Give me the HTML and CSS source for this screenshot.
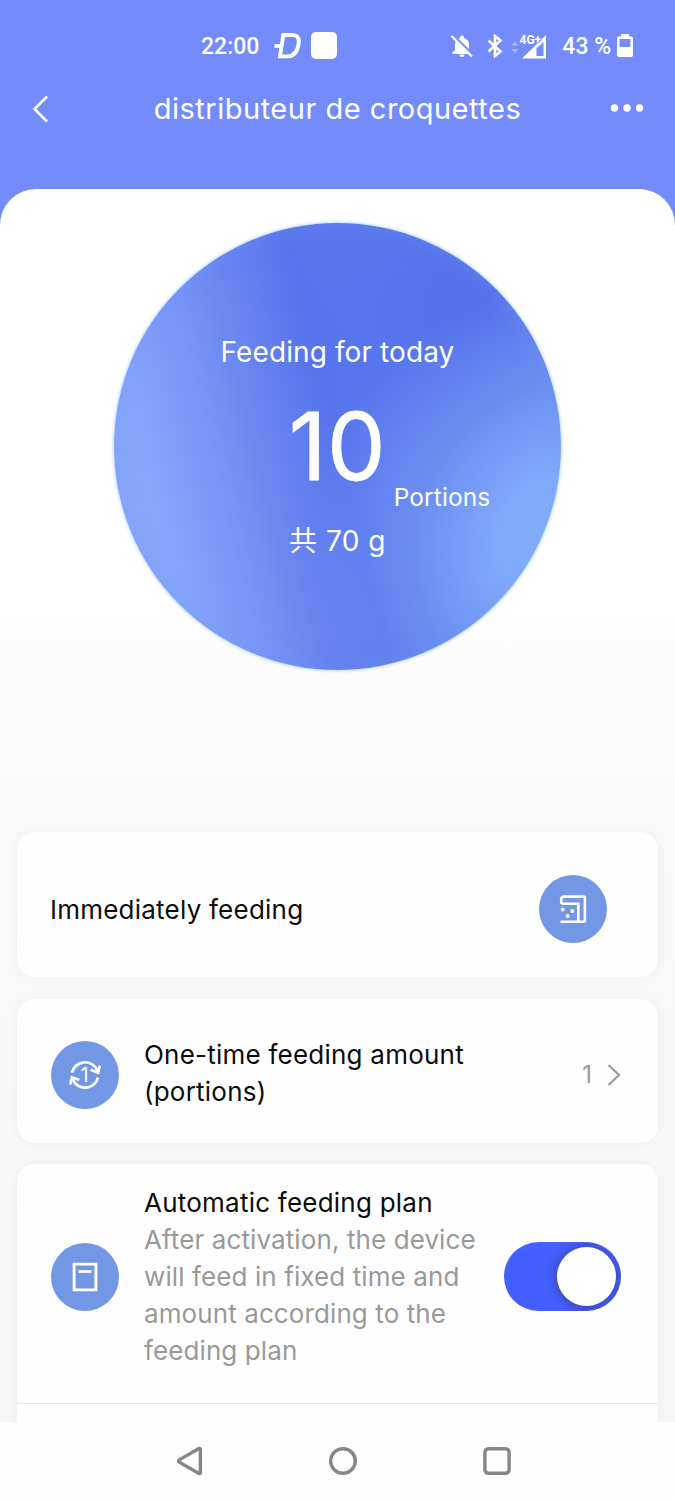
FILE: index.html
```html
<!DOCTYPE html>
<html lang="en">
<head>
<meta charset="utf-8">
<title>distributeur de croquettes</title>
<link rel="stylesheet" href="styles.css">
</head>
<body>
<div class="screen">
  <header class="top">
    <div class="status">
      <span class="clock">22:00</span>
      <svg class="ic-d" width="28" height="28" viewBox="0 0 28 28"><path d="M9.300 3h8.200c5.600 0 8 2.800 7.200 8.400-1.200 8.400-4.600 13-11.200 13H6z" fill="none" stroke="#fff" stroke-width="3.900"/><path d="M.5 14h7" stroke="#fff" stroke-width="3.700"/></svg>
      <span class="app-square"></span>
      <svg class="ic-bell" width="24" height="24" viewBox="0 0 24 24"><path d="M12 1.500a2 2 0 0 0-2 2v.6C6.800 5 5 7.500 5 10.500V16l-2.500 2.500V20h19v-1.500L19 16v-5.500c0-3-1.800-5.500-5-6.400v-.6a2 2 0 0 0-2-2zM9.500 20.500h5a2.500 2.500 0 0 1-5 0z" fill="#fff"/><path d="M3.200 1 23.500 21.300" stroke="#738bfb" stroke-width="2.300"/><path d="M1.500 2 22 22.500" stroke="#fff" stroke-width="2.200"/></svg>
      <svg class="ic-bt" width="16" height="24" viewBox="0 0 16 24"><path d="M1.500 6.500 13.500 17.500 8 22V2l5.500 4.500L1.500 17.500" fill="none" stroke="#fff" stroke-width="2.600"/></svg>
      <svg class="ic-signal" width="37" height="28" viewBox="0 -2 37 28"><path d="M.5 11.500 4 7.500l3.500 4zM.5 15 4 19l3.500-4z" fill="#a9b8fd"/><path d="M11 24.500 35 1v23.500z" fill="#fff"/><path d="M25.500 14.300 32.500 8v14h-7z" fill="#738bfb"/><text x="8.500" y="9.500" class="net">4G+</text></svg>
      <span class="battery-text">43 %</span>
      <svg class="ic-batt" width="16" height="26" viewBox="0 0 16 26"><path d="M4 1h8v2.500h2.200a1.800 1.800 0 0 1 1.800 1.800V22.200a1.800 1.800 0 0 1-1.800 1.800H1.800A1.800 1.800 0 0 1 0 22.200V5.300a1.800 1.800 0 0 1 1.800-1.800H4z" fill="#fff"/><path d="M2.500 6h11v8h-11z" fill="#738bfb"/></svg>
    </div>
    <nav class="titlebar">
      <svg width="20" height="30" viewBox="0 0 20 30"><path d="M17 2.500 4.500 15 17 27.500" fill="none" stroke="#fff" stroke-width="2.600"/></svg>
      <h1>distributeur de croquettes</h1>
      <svg width="34" height="10" viewBox="0 0 34 10"><g fill="#fff"><circle cx="4.500" cy="4" r="3.700"/><circle cx="17" cy="4" r="3.700"/><circle cx="29.500" cy="4" r="3.700"/></g></svg>
    </nav>
  </header>

  <main class="sheet">
    <section class="dial">
      <p class="dial-title">Feeding for today</p>
      <p class="dial-count">10</p>
      <p class="dial-unit">Portions</p>
      <p class="dial-total">共 70 g</p>
    </section>

    <section class="card immediate">
      <h2>Immediately feeding</h2>
      <span class="badge"><svg width="34" height="34" viewBox="0 0 34 34"><g fill="none" stroke="#fff" stroke-width="2.600"><path d="M4.500 29.700h23a1.400 1.400 0 0 0 1.400-1.400V6a1.400 1.400 0 0 0-1.400-1.400H7.600a2.400 2.400 0 0 0-2.400 2.400v3a1.700 1.700 0 0 0 1.700 1.700H22.300v18"/></g><g fill="#fff"><circle cx="6.700" cy="17.500" r="1.900"/><circle cx="16.300" cy="19" r="2"/><circle cx="11.700" cy="24" r="1.900"/></g></svg></span>
    </section>

    <section class="card amount">
      <span class="badge"><svg width="36" height="36" viewBox="0 0 36 36"><g fill="none" stroke="#fff" stroke-width="2.700"><path d="M5 15.800A13.300 13.300 0 0 1 30.300 13.500M31 20.500A13.300 13.300 0 0 1 5.800 22.500"/><path d="M23.600 12.800 31 15.700 32.800 8.600M12.300 23 5 20.300 3.300 27.500"/></g><text x="17.500" y="24.800" class="badge-num">1</text></svg></span>
      <h2>One-time feeding amount (portions)</h2>
      <span class="value">1</span>
      <svg width="14" height="24" viewBox="0 0 14 24"><path d="M1.500 2 12 12 1.500 22" fill="none" stroke="#999" stroke-width="2.200"/></svg>
    </section>

    <section class="card plan">
      <div class="plan-row">
        <span class="badge"><svg width="28" height="32" viewBox="0 0 28 32"><path d="M3.100 3.100h21.800v25.800H3.100z" fill="none" stroke="#fff" stroke-width="2.900"/><path d="M7.500 10.500h13" stroke="#fff" stroke-width="2.700"/></svg></span>
        <div class="plan-text">
          <h2>Automatic feeding plan</h2>
          <p>After activation, the device<br>will feed in fixed time and<br>amount according to the<br>feeding plan</p>
        </div>
        <span class="switch"><span class="knob"></span></span>
      </div>
    </section>
  </main>

  <footer class="sysnav">
    <svg width="30" height="32" viewBox="0 0 30 32"><path d="M26.400 4.200v23.600a.9.900 0 0 1-1.400.7L5.200 17.100a1.300 1.300 0 0 1 0-2.200L25 3.500a.9.900 0 0 1 1.400.7z" fill="none" stroke="#868686" stroke-width="3.400"/></svg>
    <svg width="30" height="32" viewBox="0 0 30 32"><circle cx="15" cy="16" r="12.300" fill="none" stroke="#868686" stroke-width="3.400"/></svg>
    <svg width="30" height="32" viewBox="0 0 30 32"><rect x="2.900" y="3.800" width="24.200" height="24.400" rx="3.500" fill="none" stroke="#868686" stroke-width="3.400"/></svg>
  </footer>
</div>
</body>
</html>
```

FILE: styles.css
```css
* { box-sizing: border-box; }
body { margin: 0; }
h1, h2, p { margin: 0; font-weight: 400; }
svg { display: block; flex: none; }

.screen {
  width: 675px;
  height: 1500px;
  display: flex;
  flex-direction: column;
  overflow: hidden;
  background: #738bfb;
  font-family: Inter, "Liberation Sans", "Noto Sans CJK SC", sans-serif;
  color: #0c0c0c;
}

.top { height: 189px; flex: none; color: #fff; }
.status {
  height: 73px;
  padding: 18px 42px 0 201px;
  display: flex;
  align-items: center;
  font: 500 23px/26px Roboto, sans-serif;
}
.clock { width: 73px; padding-top: 2px; }
.app-square { width: 27px; height: 27px; margin-left: 9px; border-radius: 5px; background: #fff; }
.ic-bell { margin-left: 113px; }
.ic-bt { margin-left: 13px; }
.ic-signal { margin-left: 8px; overflow: visible; }
.net { font: 700 12px Roboto, sans-serif; fill: #fff; stroke: #738bfb; stroke-width: 1.500px; paint-order: stroke; }
.battery-text { margin-left: 14px; padding-top: 2px; width: 55px; white-space: nowrap; }

.titlebar {
  height: 72px;
  padding: 0 31px 0 30px;
  display: flex;
  align-items: center;
  justify-content: space-between;
}
.titlebar h1 { font-size: 29px; line-height: 36px; letter-spacing: 0.500px; padding-left: 15px; white-space: nowrap; }

.sheet {
  height: 1233px;
  flex: none;
  overflow: hidden;
  padding: 34px 17px 0;
  border-radius: 36px 36px 0 0;
  background: linear-gradient(#fff 0, #fff 420px, #fcfcfc 470px, #f8f8f8 650px, #f7f7f7 100%);
}

.dial {
  width: 447px;
  height: 447px;
  margin: 0 auto 162px;
  padding-top: 111px;
  display: flex;
  flex-direction: column;
  align-items: center;
  border-radius: 50%;
  color: #fff;
  background:
    radial-gradient(circle at 106% 74%, #88b6fd 0, rgba(136,182,253,.8) 14%, rgba(136,182,253,.3) 30%, rgba(136,182,253,0) 48%),
    radial-gradient(circle at 78% 18%, rgba(79,109,234,.85) 0, rgba(79,109,234,.5) 18%, rgba(79,109,234,0) 42%),
    linear-gradient(76deg, #8dadfa 0, #84a5f9 16%, #7896f6 27%, #6784f1 38%, #5a76ed 50%, #5f7def 62%, #6e8ef3 100%);
  box-shadow: 0 0 3px 1px #b9d8fb, inset 0 0 22px rgba(110,145,240,.35);
}
.dial-title { font-size: 28px; line-height: 36px; letter-spacing: 0.100px; }
.dial-count { margin-top: 23px; font-size: 93px; line-height: 106px; letter-spacing: 0.500px; -webkit-text-stroke: 0.800px #fff; }
.dial-unit { margin: -16px 0 0 209px; font-size: 24.500px; line-height: 28px; letter-spacing: 0.100px; }
.dial-total { margin-top: 12px; font-size: 28px; line-height: 36px; letter-spacing: 0.500px; }

.card { border-radius: 18px; background: #fefefe; box-shadow: 0 0 14px rgba(0,0,0,.035); }
.card h2 { font-size: 26px; line-height: 37px; letter-spacing: 0.230px; }
.badge {
  width: 68px;
  height: 68px;
  flex: none;
  display: flex;
  align-items: center;
  justify-content: center;
  border-radius: 50%;
  background: #7297e4;
}
.badge-num { font: 20px Inter, sans-serif; fill: #fff; text-anchor: middle; }

.immediate {
  height: 145px;
  margin-bottom: 22px;
  padding: 9px 51px 0 33px;
  display: flex;
  align-items: center;
  justify-content: space-between;
}

.amount {
  height: 144px;
  margin-bottom: 21px;
  padding: 8px 37px 0 34px;
  display: flex;
  align-items: center;
}
.amount h2 { width: 345px; margin-left: 25px; padding-bottom: 5px; }
.value { margin-left: auto; padding: 0 15px 2px 0; font-size: 24px; color: #999; }

.plan { height: 400px; }
.plan-row {
  height: 240px;
  padding: 20px 37px 0 34px;
  display: flex;
  align-items: flex-start;
  border-bottom: 1px solid #e6e6e6;
}
.plan .badge { margin-top: 59px; }
.plan-text { width: 345px; margin-left: 25px; white-space: nowrap; }
.plan-text p { font-size: 26px; line-height: 37px; letter-spacing: 0.100px; color: #999; }
.switch {
  width: 117px;
  height: 69px;
  margin: 58px 0 0 auto;
  padding: 5px;
  display: flex;
  justify-content: flex-end;
  border-radius: 35px;
  background: #435fff;
  overflow: hidden;
}
.knob { width: 59px; height: 59px; border-radius: 50%; background: #fff; box-shadow: 0 1px 9px 3px rgba(60,60,120,.5); }

.sysnav {
  height: 78px;
  flex: none;
  display: flex;
  justify-content: center;
  align-items: center;
  gap: 124px;
  padding-left: 11px;
  background: #fefefe;
}
```
